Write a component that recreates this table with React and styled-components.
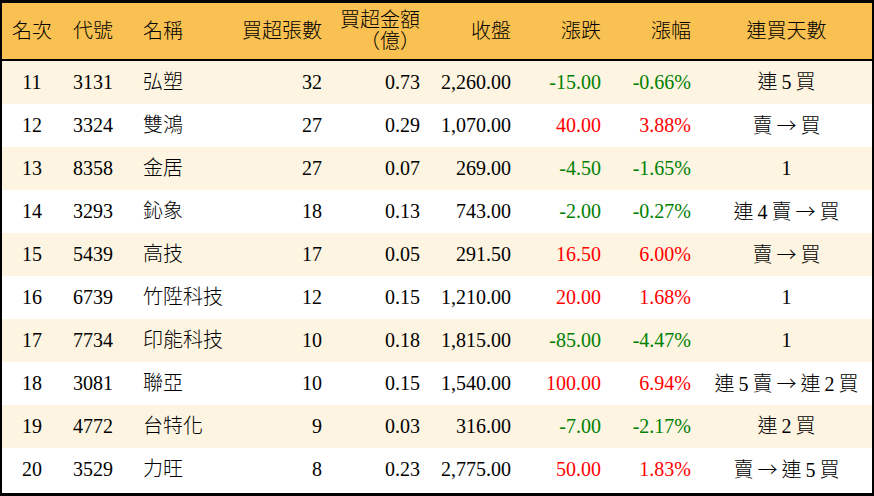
import React from "react";
import styled, { createGlobalStyle } from "styled-components";

const Global = createGlobalStyle`
  html, body { margin: 0; padding: 0; background: #fff; }
  * { box-sizing: border-box; }
`;

const COLS = "60px 71px 97px 102px 98px 91px 90px 90px 171px";

const Frame = styled.div`
  width: 874px;
  height: 496px;
  border-style: solid;
  border-color: #000;
  border-width: 3px 2px 3px 2px;
  background: #fff;
  font-family: "Liberation Serif", "Noto Sans CJK TC", serif;
  font-size: 20px;
  font-weight: 300;
  color: #000;
`;

const HeaderRow = styled.div`
  display: grid;
  grid-template-columns: ${COLS};
  height: 58px;
  background: #f9c151;
  border-bottom: 2px solid #000;
  align-items: center;
`;

const Row = styled.div`
  display: grid;
  grid-template-columns: ${COLS};
  height: 43px;
  align-items: center;
  background: ${(p) => (p.$shaded ? "#fdf4e1" : "#ffffff")};
`;

const Cell = styled.div`
  text-align: ${(p) => p.$align || "left"};
  padding-left: ${(p) => p.$pl || 0}px;
  padding-right: ${(p) => p.$pr || 0}px;
  color: ${(p) => (p.$tone === "up" ? "#ff0000" : p.$tone === "down" ? "#008000" : "#000")};
  white-space: nowrap;
  line-height: 21px;
`;

const StreakCell = styled(Cell)`
  word-spacing: -1px;
`;

const Arrow = styled.span`
  font-family: "Noto Sans CJK TC", sans-serif;
  font-weight: 300;
`;

const cols = [
  { align: "center", pl: 0, pr: 0 },
  { align: "left", pl: 11, pr: 0 },
  { align: "left", pl: 10, pr: 0 },
  { align: "right", pl: 0, pr: 10 },
  { align: "right", pl: 0, pr: 10 },
  { align: "right", pl: 0, pr: 10 },
  { align: "right", pl: 0, pr: 10 },
  { align: "right", pl: 0, pr: 10 },
  { align: "center", pl: 0, pr: 0 },
];

const headers = [
  "名次",
  "代號",
  "名稱",
  "買超張數",
  <>買超金額<br />（億）</>,
  "收盤",
  "漲跌",
  "漲幅",
  "連買天數",
];

const data = [
  ["11", "3131", "弘塑", "32", "0.73", "2,260.00", "-15.00", "-0.66%", "連 5 買"],
  ["12", "3324", "雙鴻", "27", "0.29", "1,070.00", "40.00", "3.88%", "賣 → 買"],
  ["13", "8358", "金居", "27", "0.07", "269.00", "-4.50", "-1.65%", "1"],
  ["14", "3293", "鈊象", "18", "0.13", "743.00", "-2.00", "-0.27%", "連 4 賣 → 買"],
  ["15", "5439", "高技", "17", "0.05", "291.50", "16.50", "6.00%", "賣 → 買"],
  ["16", "6739", "竹陞科技", "12", "0.15", "1,210.00", "20.00", "1.68%", "1"],
  ["17", "7734", "印能科技", "10", "0.18", "1,815.00", "-85.00", "-4.47%", "1"],
  ["18", "3081", "聯亞", "10", "0.15", "1,540.00", "100.00", "6.94%", "連 5 賣 → 連 2 買"],
  ["19", "4772", "台特化", "9", "0.03", "316.00", "-7.00", "-2.17%", "連 2 買"],
  ["20", "3529", "力旺", "8", "0.23", "2,775.00", "50.00", "1.83%", "賣 → 連 5 買"],
];

function Streak({ text }) {
  const parts = text.split("→");
  return parts.map((p, i) => (
    <React.Fragment key={i}>
      {i > 0 && <Arrow>→</Arrow>}
      {p}
    </React.Fragment>
  ));
}

export default function App() {
  return (
    <>
      <Global />
      <Frame>
        <HeaderRow>
          {headers.map((h, i) => (
            <Cell key={i} $align={cols[i].align} $pl={cols[i].pl} $pr={cols[i].pr}>
              {h}
            </Cell>
          ))}
        </HeaderRow>
        {data.map((r, ri) => {
          const tone = r[6].startsWith("-") ? "down" : "up";
          return (
            <Row key={ri} $shaded={ri % 2 === 0}>
              {r.slice(0, 8).map((v, i) => (
                <Cell
                  key={i}
                  $align={cols[i].align}
                  $pl={cols[i].pl}
                  $pr={cols[i].pr}
                  $tone={i === 6 || i === 7 ? tone : undefined}
                >
                  {v}
                </Cell>
              ))}
              <StreakCell $align="center">
                <Streak text={r[8]} />
              </StreakCell>
            </Row>
          );
        })}
      </Frame>
    </>
  );
}
